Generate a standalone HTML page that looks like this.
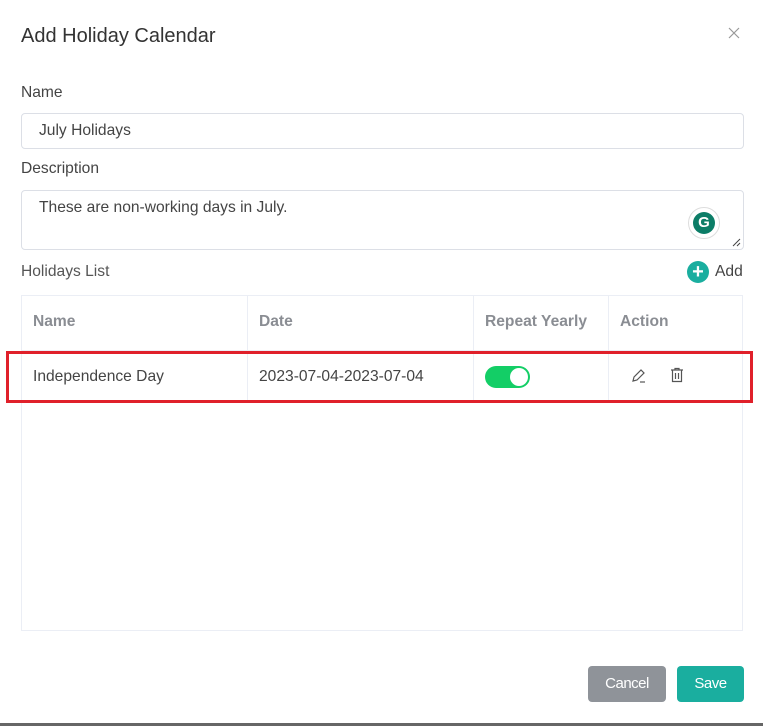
<html><head><style>
body{margin:0;width:763px;height:726px;background:#fff;font-family:"Liberation Sans",sans-serif;position:relative;overflow:hidden;color:#333}
.a{position:absolute}
.inp{position:absolute;border:1px solid #dcdfe6;border-radius:4px;box-sizing:border-box}
.l{font-size:15.6px;color:#444}
.th{font-size:15.6px;font-weight:bold;color:#8a8d93;top:313px}
.td{font-size:15.6px;color:#444;top:368px}
.vl{position:absolute;width:1px;background:#ebeef5;top:296px;height:105px}
.btn{position:absolute;top:666px;height:36px;border-radius:4px;color:#fff;font-size:15px;text-align:center;line-height:36px;letter-spacing:-0.5px}
</style></head><body>
<div class="a" style="left:21px;top:25px;font-size:20px;color:#333">Add Holiday Calendar</div>
<svg class="a" style="left:728px;top:27px" width="12" height="12" viewBox="0 0 12 12" stroke="#999" stroke-width="1.2"><path d="M1 1l10 10M11 1L1 11"/></svg>
<div class="a l" style="left:21px;top:84px">Name</div>
<div class="inp" style="left:21px;top:113px;width:723px;height:36px"></div>
<div class="a l" style="left:39px;top:122px">July Holidays</div>
<div class="a l" style="left:21px;top:160px">Description</div>
<div class="inp" style="left:21px;top:190px;width:723px;height:60px"></div>
<div class="a l" style="left:39px;top:199px">These are non-working days in July.</div>
<svg class="a" style="left:731px;top:237px" width="10" height="10" stroke="#444" stroke-width="1"><path d="M2 9L9 2M6 9L9 6"/></svg>
<div class="a" style="left:688px;top:207px;width:32px;height:32px;border-radius:50%;border:1px solid #ddd;box-sizing:border-box;background:#fff"></div>
<div class="a" style="left:693px;top:212px;width:22px;height:22px;border-radius:50%;background:#0c7d67;color:#fff;font-size:15px;font-weight:bold;text-align:center;line-height:22px">G</div>
<div class="a l" style="left:21px;top:263px;color:#555">Holidays List</div>
<div class="a" style="left:687px;top:261px;width:22px;height:22px;border-radius:50%;background:#1aae9f;color:#fff;font-size:20px;font-weight:bold;text-align:center;line-height:22px">+</div>
<div class="a l" style="left:715px;top:263px">Add</div>
<div class="a" style="left:21px;top:295px;width:722px;height:336px;border:1px solid #ebeef5;box-sizing:border-box"></div>
<div class="a" style="left:21px;top:350px;width:722px;height:1px;background:#ebeef5"></div>
<div class="a" style="left:21px;top:400px;width:722px;height:1px;background:#ebeef5"></div>
<div class="vl" style="left:247px"></div><div class="vl" style="left:473px"></div><div class="vl" style="left:608px"></div>
<div class="a th" style="left:33px">Name</div>
<div class="a th" style="left:259px">Date</div>
<div class="a th" style="left:485px">Repeat Yearly</div>
<div class="a th" style="left:620px">Action</div>
<div class="a td" style="left:33px">Independence Day</div>
<div class="a td" style="left:259px">2023-07-04-2023-07-04</div>
<div class="a" style="left:485px;top:366px;width:45px;height:22px;border-radius:11px;background:#13ce66"></div>
<div class="a" style="left:510px;top:368px;width:18px;height:18px;border-radius:50%;background:#fff"></div>
<svg class="a" style="left:630px;top:367px" width="18" height="18" viewBox="0 0 18 18" fill="none" stroke="#555" stroke-width="1.2"><path d="M3 14l1-4 7-7 3 3-7 7z"/><path d="M10 15h5"/></svg>
<svg class="a" style="left:669px;top:367px" width="16" height="16" viewBox="0 0 16 16" fill="none" stroke="#555" stroke-width="1.2"><path d="M2 3h12M6 3V1.5h4V3M3.5 3v11.5h9V3M6.5 6v6M9.5 6v6"/></svg>
<div class="a" style="left:6px;top:351px;width:747px;height:52px;border:3px solid #e0202a;box-sizing:border-box"></div>
<div class="btn" style="left:588px;width:78px;background:#8f9399">Cancel</div>
<div class="btn" style="left:677px;width:67px;background:#1aae9f">Save</div>
<div class="a" style="left:0;top:723px;width:763px;height:3px;background:#666"></div>
</body></html>
